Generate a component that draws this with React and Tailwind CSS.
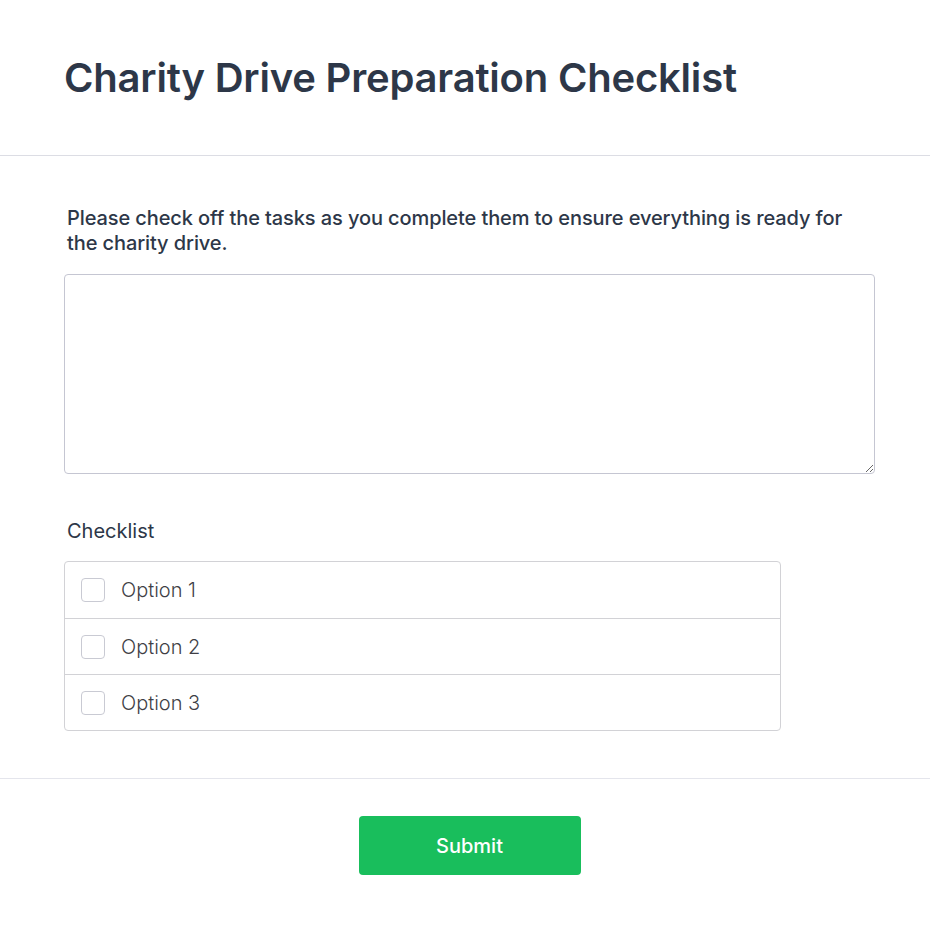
export default function App() {
  const options = ['Option 1', 'Option 2', 'Option 3'];

  return (
    <div className="min-h-screen bg-white text-[#2d3748]" style={{ fontFamily: 'Inter, "Noto Sans", sans-serif' }}>
      <div className="border-b border-[#dcdde4] pl-16 pr-[55px] pt-[51px] pb-[50px]">
        <h1 className="text-[40px] leading-[54px] font-semibold tracking-[-0.2px]">
          Charity Drive Preparation Checklist
        </h1>
      </div>

      <div className="pl-16 pr-[55px] pt-[50px] pb-[47px]">
        <p className="px-[3px] text-[20px] leading-[25px] font-medium tracking-[-0.1px]">
          Please check off the tasks as you complete them to ensure everything is ready for the charity drive.
        </p>
        <textarea className="mt-[18px] block h-[200px] w-full rounded-[4px] border border-[#c5c6d2] p-3 text-[16px] outline-none"></textarea>

        <div className="mt-[45px] px-[3px] text-[20px] leading-[25px]">Checklist</div>
        <div className="mt-[17px] w-[717px] rounded-[4px] border border-[#d2d2d6]">
          {options.map((o, i) => (
            <label
              key={o}
              className={`flex h-[56px] items-center gap-4 px-4 ${i > 0 ? 'border-t border-[#d2d2d6]' : ''}`}
            >
              <input type="checkbox" className="h-6 w-6 appearance-none rounded-[4px] border border-[#c9cad3] bg-white" />
              <span className="text-[20px] font-light text-[#3f3f46]">{o}</span>
            </label>
          ))}
        </div>
      </div>

      <div className="border-t border-[#e4e5ec] flex justify-center pl-16 pr-[55px] pt-[37px] pb-12">
        <button className="h-[59px] w-[222px] rounded-[4px] bg-[#19be5c] text-[20px] font-medium text-white">
          Submit
        </button>
      </div>
    </div>
  );
}
